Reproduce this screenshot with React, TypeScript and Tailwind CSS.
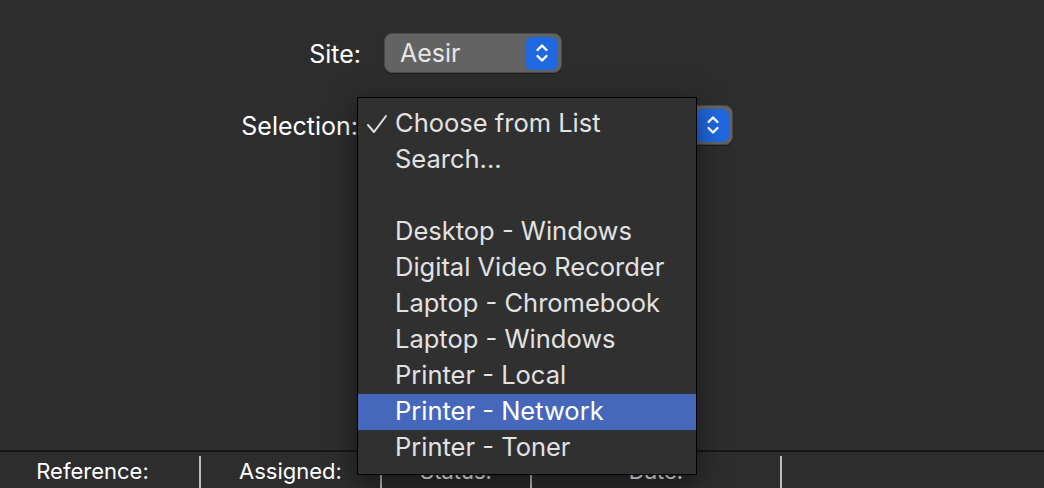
import React from "react";

function Chevrons() {
  return (
    <svg width="14" height="22" viewBox="0 0 14 22" fill="none" stroke="white" strokeWidth="2.4" strokeLinecap="round" strokeLinejoin="round">
      <path d="M2.5 8 L7 3.5 L11.5 8" />
      <path d="M2.5 14 L7 18.5 L11.5 14" />
    </svg>
  );
}

function Popup({ text, width }: { text: string; width: string }) {
  return (
    <div className={`${width} h-[40px] rounded-[8px] bg-[#636363] border border-[#4a4a4a] flex items-center justify-between pl-[15px] pr-[3px] shadow-[0_1px_1px_rgba(0,0,0,0.3)]`}>
      <span className="text-[25px] text-[#e6e6e6] leading-none">{text}</span>
      <div className="w-[33px] h-[33px] rounded-[7px] bg-[#1f68e0] flex items-center justify-center">
        <Chevrons />
      </div>
    </div>
  );
}

const items: { label: string; check?: boolean; selected?: boolean; blank?: boolean }[] = [
  { label: "Choose from List", check: true },
  { label: "Search..." },
  { label: "", blank: true },
  { label: "Desktop - Windows" },
  { label: "Digital Video Recorder" },
  { label: "Laptop - Chromebook" },
  { label: "Laptop - Windows" },
  { label: "Printer - Local" },
  { label: "Printer - Network", selected: true },
  { label: "Printer - Toner" },
];

export default function App() {
  return (
    <div
      className="w-[1044px] h-[488px] bg-[#2d2d2d] relative overflow-hidden flex flex-col text-white"
      style={{ fontFamily: "Inter, 'Noto Sans', sans-serif" }}
    >
      <div className="flex-1 flex flex-col pt-[33px] gap-[32px]">
        <div className="flex items-center">
          <div className="w-[361px] text-right text-[25px] leading-none pt-[2px]">Site:</div>
          <div className="ml-[23px]">
            <Popup text="Aesir" width="w-[178px]" />
          </div>
        </div>
        <div className="flex items-center">
          <div className="w-[358px] text-right text-[25px] leading-none pt-[2px]">Selection:</div>
          <div className="ml-[10px]">
            <Popup text="" width="w-[365px]" />
          </div>
        </div>
      </div>

      <div className="h-[38px] border-t-2 border-[#161616] flex text-[22px] leading-none">
        {[
          { w: "w-[199px] pr-[14px]", t: "Reference:" },
          { w: "w-[181px]", t: "Assigned:" },
          { w: "w-[150px]", t: "Status:" },
          { w: "w-[250px]", t: "Date:" },
          { w: "flex-1", t: "" },
        ].map((c, i) => (
          <div key={i} className={`${c.w} flex items-center justify-center ${i > 0 ? "border-l-2 border-[#bdbdbd] mt-[4px] pb-[2px]" : "pt-[2px]"}`}>
            {c.t}
          </div>
        ))}
      </div>

      <div className="absolute left-[357px] top-[97px] w-[340px] h-[378px] bg-[#303030] border border-black shadow-[0_8px_24px_rgba(0,0,0,0.5)] py-[8px]">
        {items.map((it, i) => (
          <div
            key={i}
            className={`h-[36px] flex items-center text-[25.5px] leading-none pb-[2px] ${it.selected ? "bg-[#4668ba] text-white" : "text-[#e2e2e2]"}`}
          >
            <div className="w-[37px] flex justify-end pr-[7px] pt-[2px]">
              {it.check ? (
                <svg width="22" height="20" viewBox="0 0 22 20" fill="none" stroke="#e2e2e2" strokeWidth="2" strokeLinecap="round" strokeLinejoin="round">
                  <path d="M2 11 L8 18 L20 2" />
                </svg>
              ) : null}
            </div>
            <span>{it.label}</span>
          </div>
        ))}
      </div>
    </div>
  );
}
